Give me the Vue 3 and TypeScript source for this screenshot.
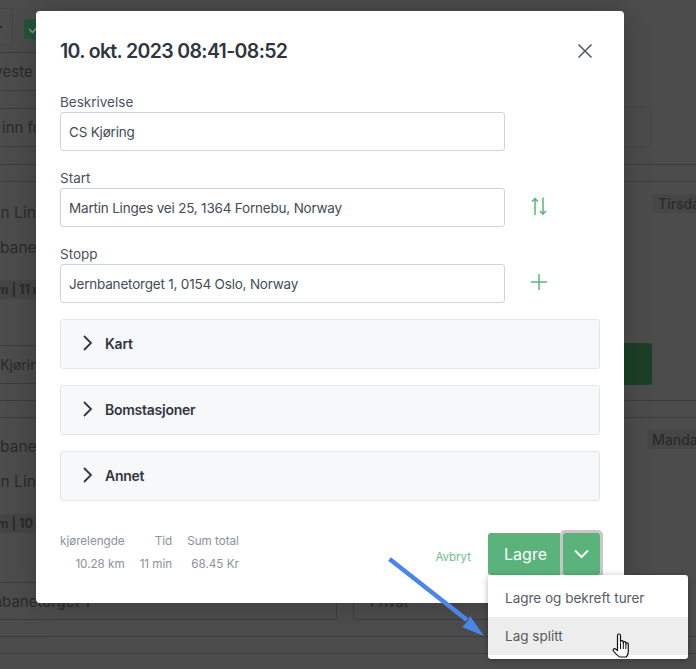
<script setup lang="ts">
const sections: string[] = ['Kart', 'Bomstasjoner', 'Annet']
</script>

<template>
  <div class="page">
    <div class="bg">
      <div class="toolbar">
        <span class="tool-btn"><i class="tool-mark"></i></span>
        <span class="tool-check">
          <svg width="12" height="10" viewBox="0 0 12 10"><path d="M1 5l3.500 3.500L11 1.500" stroke="#7f9a88" stroke-width="1.500" fill="none"/></svg>
        </span>
      </div>
      <div class="bar latest"><span class="cut-latest">Nyeste t</span></div>
      <div class="search">
        <span class="bar search-left"><span class="cut-search">Skriv inn fo</span></span>
        <span class="search-box"></span>
      </div>
      <div class="line"></div>
      <div class="line"></div>
      <div class="trip">
        <div class="tag-row"><span class="tag tag-a">Tirsdag</span></div>
        <div class="trip-line cut-a">Martin Ling</div>
        <div class="trip-line cut-b">Jernbanet</div>
        <div class="trip-km"><span class="cut-k">10 km | 11 m</span></div>
      </div>
      <div class="desc">
        <span class="bar desc-left"><span class="cut-c">CS Kjørin</span></span>
        <span class="go"></span>
      </div>
      <div class="line short"></div>
      <div class="line"></div>
      <div class="trip trip2">
        <div class="tag-row"><span class="tag tag-b">Mandag</span></div>
        <div class="trip-line cut-b">Jernbanet</div>
        <div class="trip-line cut-a">Martin Ling</div>
        <div class="trip-km"><span class="cut-k">10 km | 10 m</span></div>
      </div>
      <div class="fields">
        <span class="box box-left"><span class="cut-d">Jernbanetorget 1</span></span>
        <span class="box box-right">Privat</span>
      </div>
      <div class="line"></div>
      <div class="line"></div>
    </div>

    <div class="modal">
      <header class="head">
        <h1>10. okt. 2023 08:41-08:52</h1>
        <svg class="close" width="16" height="16" viewBox="0 0 16 16"><path d="M1.500 1.500 14.500 14.500M14.500 1.500 1.500 14.500" stroke="#4d5a66" stroke-width="1.500" fill="none"/></svg>
      </header>

      <div class="field">
        <label>Beskrivelse</label>
        <div class="input-row"><div class="input">CS Kjøring</div></div>
      </div>
      <div class="field">
        <label>Start</label>
        <div class="input-row">
          <div class="input">Martin Linges vei 25, 1364 Fornebu, Norway</div>
          <svg class="side" width="16" height="18" viewBox="0 0 16 18"><path d="M4 18V1.500M1 4.500 4 1.500l3 3M12 .500V17M9 14l3 3 3-3" stroke="#5cb57e" stroke-width="1.500" fill="none"/></svg>
        </div>
      </div>
      <div class="field">
        <label>Stopp</label>
        <div class="input-row">
          <div class="input">Jernbanetorget 1, 0154 Oslo, Norway</div>
          <svg class="side" width="16" height="16" viewBox="0 0 16 16"><path d="M8 0v16M0 8h16" stroke="#5cb57e" stroke-width="1.500" fill="none"/></svg>
        </div>
      </div>

      <div class="acc-list">
        <div v-for="s in sections" :key="s" class="acc">
          <svg width="12" height="16" viewBox="0 0 12 16"><path d="M2 1l7 7-7 7" stroke="#2f3640" stroke-width="1.800" fill="none"/></svg>
          <span>{{ s }}</span>
        </div>
      </div>

      <footer class="foot">
        <div class="stats">
          <span>kjørelengde</span><span>Tid</span><span>Sum total</span>
          <span>10.28 km</span><span>11 min</span><span>68.45 Kr</span>
        </div>
        <div class="actions">
          <span class="cancel">Avbryt</span>
          <div class="split">
            <span class="save">Lagre</span>
            <span class="caret">
              <svg width="15" height="10" viewBox="0 0 15 10"><path d="M1 1.500l6.500 6.500 6.500-6.500" stroke="#fff" stroke-width="2" fill="none"/></svg>
            </span>
          </div>
        </div>
      </footer>
    </div>

    <div class="menu">
      <div class="item">Lagre og bekreft turer</div>
      <div class="item hover">Lag splitt</div>
    </div>

    <svg class="arrow" width="110" height="90" viewBox="0 0 110 90">
      <path d="M2.500 3 80 64" stroke="#4a86e8" stroke-width="4.500" fill="none"/>
      <path d="M97 80 75 71 80 66 83 60Z" fill="#4a86e8"/>
    </svg>

    <svg class="hand" width="19" height="25" viewBox="0 0 19 25">
      <path d="M5.500 14V2.500a1.500 1.500 0 0 1 3 0V9a1.400 1.400 0 0 1 2.800 0v1a1.300 1.300 0 0 1 2.600 0v1a1.200 1.200 0 0 1 2.400 0v7c0 3-1 5-2 6H8C6 23.500 3.500 20.500 1.500 18c-1-1.500.5-3 2-2l2 1.500Z" fill="#fff" stroke="#111" stroke-width="1.200" stroke-linejoin="round"/>
      <path d="M8.500 10v6M11.300 10v6M13.900 11v5" stroke="#111" stroke-width="1"/>
    </svg>
  </div>
</template>

<style>
html, body { margin: 0; background: #4c4c4c; }
</style>

<style scoped>
.page {
  position: relative;
  width: 696px;
  height: 669px;
  overflow: hidden;
  background: #4c4c4c;
  font-family: Inter, "Open Sans", sans-serif;
  color: #2f3640;
}
.bg { display: flex; flex-direction: column; color: #2a2a2a; font-size: 15px; white-space: nowrap; }
.toolbar { height: 52px; display: flex; gap: 11px; padding-top: 8px; box-sizing: border-box; }
.tool-btn { width: 13px; height: 38px; border: 1px solid #444; border-left: 0; box-sizing: border-box; border-radius: 0 3px 3px 0; display: flex; align-items: center; }
.tool-mark { width: 2px; height: 2px; background: #2a2a2a; }
.tool-check { width: 20px; height: 20px; margin-top: 11px; background: #235537; border-radius: 3px; display: flex; align-items: center; justify-content: center; }
.bar { border-top: 1px solid #3c3c3c; border-bottom: 1px solid #3c3c3c; box-sizing: border-box; display: flex; align-items: center; }
.latest { height: 39px; width: 400px; }
.cut-latest { margin-left: -17px; }
.search { height: 41px; margin-top: 16px; display: flex; justify-content: space-between; align-items: center; }
.search-left { width: 500px; height: 39px; }
.cut-search { margin-left: -38px; }
.search-box { width: 100px; height: 41px; margin-right: 45px; border: 1px solid #444; border-radius: 3px; box-sizing: border-box; }
.line { height: 17px; box-sizing: border-box; border-bottom: 1px solid #3c3c3c; }
.short { height: 16px; }
.trip { position: relative; height: 161px; box-sizing: border-box; padding-top: 13px; }
.trip2 { height: 164px; padding-top: 11px; }
.tag-row { position: absolute; right: 0; top: 12px; width: 43px; overflow: hidden; display: flex; }
.trip2 .tag-row { width: 49px; }
.trip-line { height: 35px; display: flex; align-items: center; font-size: 15.500px; }
.cut-a { margin-left: -37px; }
.cut-b { margin-left: -33px; }
.trip-km { margin-top: 15px; width: 120px; height: 19px; background: #454545; display: flex; align-items: center; font-size: 12.500px; font-weight: 700; }
.cut-k { margin-left: -27px; }
.tag { background: #464646; border-radius: 3px; padding: 1px 5px; font-size: 14px; font-weight: 500; flex: none; }
.desc { height: 42px; display: flex; justify-content: space-between; align-items: center; }
.desc-left { width: 500px; height: 39px; }
.cut-c { margin-left: -23px; font-size: 14px; }
.go { width: 100px; height: 42px; background: #1c3f27; border-radius: 3px; margin-right: 44px; }
.fields { height: 38px; display: flex; gap: 16px; margin-left: -24px; font-size: 15px; }
.box { height: 38px; box-sizing: border-box; border: 1px solid #3c3c3c; border-radius: 3px; display: flex; align-items: center; }
.box-left { width: 361px; }
.box-right { width: 160px; padding-left: 16px; font-size: 14px; }
.cut-d { margin-left: -7px; }

.modal {
  position: absolute;
  left: 36px;
  top: 11px;
  width: 588px;
  height: 592px;
  box-sizing: border-box;
  padding: 0 24px;
  background: #fff;
  border-radius: 4px;
  box-shadow: 0 0 30px rgba(0, 0, 0, .22);
}
.head { display: flex; justify-content: space-between; align-items: center; height: 80px; padding-right: 7px; }
h1 { margin: 0; font-size: 19.500px; font-weight: 600; color: #2f3640; letter-spacing: -.65px; }
.close { flex: none; }
.field { display: flex; flex-direction: column; margin-bottom: 16px; }
label { font-size: 13.500px; line-height: 23px; color: #4a525c; height: 21px; }
.input-row { display: flex; align-items: center; gap: 26px; }
.input {
  width: 445px;
  height: 39px;
  box-sizing: border-box;
  border: 1px solid #ced4da;
  border-radius: 3px;
  padding: 0 8px;
  display: flex;
  align-items: center;
  font-size: 13.500px;
  letter-spacing: -.2px;
  color: #434c57;
}
.side { flex: none; margin-bottom: 3px; }
.acc-list { display: flex; flex-direction: column; gap: 16px; }
.acc {
  height: 50px;
  box-sizing: border-box;
  border: 1px solid #e3e5e9;
  border-radius: 3px;
  background: #f7f8fa;
  display: flex;
  align-items: center;
  gap: 11px;
  padding: 0 0 2px 21px;
  font-size: 14px;
  font-weight: 600;
  letter-spacing: -.25px;
  color: #2f3640;
}
.foot { display: flex; justify-content: space-between; margin-top: 32px; }
.stats {
  display: grid;
  grid-template-columns: auto auto auto;
  column-gap: 15px;
  row-gap: 9px;
  justify-content: start;
  justify-items: end;
  font-size: 11.700px;
  letter-spacing: -.03px;
  line-height: 14px;
  color: #8b929b;
  height: 42px;
  padding-top: 1px;
  box-sizing: border-box;
  align-content: start;
}
.actions { display: flex; align-items: center; gap: 17px; }
.cancel { font-size: 11.500px; color: #6cbd8a; margin-top: 6px; }
.split { display: flex; gap: 3px; }
.save {
  width: 72px;
  height: 42px;
  box-sizing: border-box;
  padding-left: 3px;
  background: #5ab37b;
  color: #fff;
  border-radius: 3px 0 0 3px;
  display: flex;
  align-items: center;
  justify-content: center;
  font-size: 16px;
}
.caret {
  width: 37px;
  height: 42px;
  background: #5ab37b;
  outline: 3px solid #c7c7c7;
  border-radius: 2px;
  display: flex;
  align-items: center;
  justify-content: center;
}
.menu {
  position: absolute;
  left: 488px;
  top: 575px;
  width: 200px;
  height: 84px;
  padding-top: 4px;
  box-sizing: border-box;
  background: #fff;
  border-radius: 3px;
  box-shadow: 0 1px 6px rgba(0, 0, 0, .3);
}
.item { height: 38px; display: flex; align-items: center; padding-left: 17px; font-size: 13.500px; color: #555c64; }
.hover { background: #ededed; }
.arrow { position: absolute; left: 387px; top: 556px; }
.hand { position: absolute; left: 612px; top: 633px; }
</style>
